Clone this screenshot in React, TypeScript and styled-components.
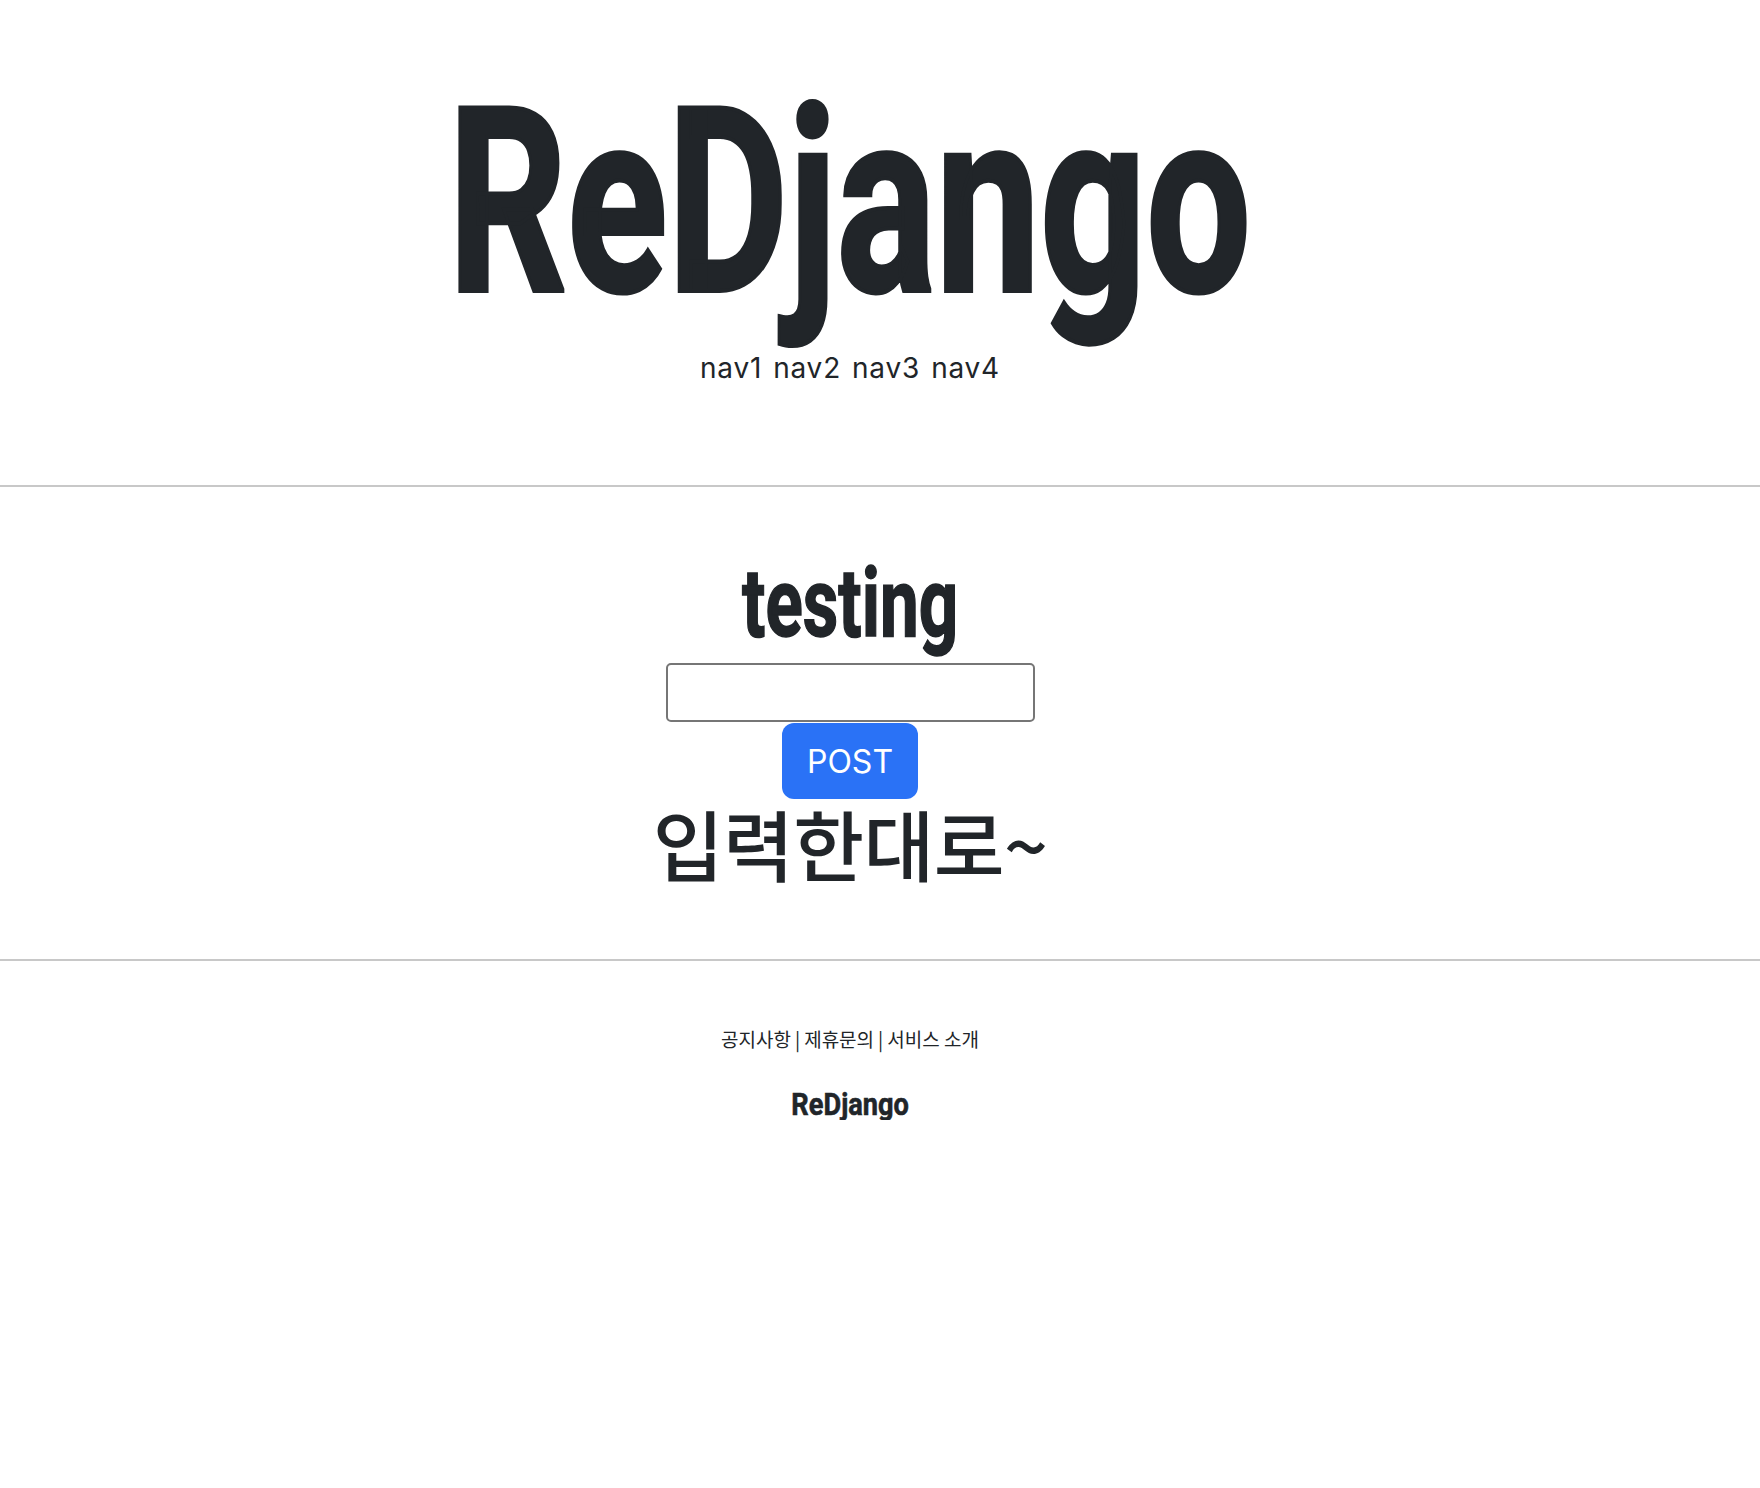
import * as React from "react";
import { useState } from "react";
import styled, { createGlobalStyle } from "styled-components";

const GlobalStyle = createGlobalStyle`
  html, body {
    margin: 0;
    padding: 0;
    background: #fff;
    color: #212529;
    font-family: Inter, "Noto Sans CJK KR", sans-serif;
  }
`;

const Page = styled.div`
  display: flex;
  flex-direction: column;
  width: 100%;
`;

// content sits a little left of the window centre in the original
const Section = styled.section<{ $top: number; $bottom: number }>`
  display: flex;
  flex-direction: column;
  align-items: center;
  padding: ${(p) => p.$top}px 60px ${(p) => p.$bottom}px 0;
`;

// no Oswald offline: bold Roboto squeezed sideways
const Condensed = styled.span<{ $size: number; $scale: number; $stroke: number }>`
  display: inline-block;
  font-family: Roboto, "Liberation Sans", sans-serif;
  font-weight: 700;
  font-size: ${(p) => p.$size}px;
  line-height: 1;
  color: #212529;
  -webkit-text-stroke: ${(p) => p.$stroke}px #212529;
  transform: scaleX(${(p) => p.$scale});
  transform-origin: center;
  white-space: nowrap;
`;

const Nav = styled.nav`
  display: flex;
  gap: 11px;
  margin-top: 22px;
  font-family: Inter, sans-serif;
  font-size: 28px;
  letter-spacing: 0.8px;
  line-height: 1;
  color: #212529;
`;

const NavLink = styled.a`
  color: inherit;
  text-decoration: none;
`;

const Divider = styled.hr`
  width: 100%;
  margin: 0;
  border: 0;
  border-top: 2px solid #c8c8c8;
`;

const TextInput = styled.input`
  box-sizing: border-box;
  width: 369px;
  height: 59px;
  margin-top: 12px;
  border: 2px solid #767676;
  border-radius: 5px;
  padding: 0 10px;
  font-size: 28px;
  font-family: Inter, sans-serif;
  outline: none;
`;

const PostButton = styled.button`
  box-sizing: border-box;
  width: 136px;
  height: 76px;
  margin-top: 1px;
  border: 0;
  border-radius: 12px;
  background: #2a72f6;
  color: #fff;
  font-family: Inter, sans-serif;
  font-size: 32px;
  cursor: pointer;
`;

const Output = styled.div`
  margin-top: -2px;
  font-family: "Noto Sans CJK KR", sans-serif;
  font-weight: 500;
  font-size: 77px;
  letter-spacing: -0.6px;
  line-height: 1.2;
  color: #212529;
`;

const FooterLinks = styled.div`
  display: flex;
  gap: 4px;
  margin-bottom: 40px;
  font-family: "Noto Sans CJK KR", sans-serif;
  font-size: 19px;
  line-height: 1;
  color: #212529;
`;

export default function App() {
  const [text, setText] = useState("");
  const [shown, setShown] = useState("입력한대로~");

  return (
    <Page>
      <GlobalStyle />
      <Section $top={74} $bottom={103}>
        <Condensed $size={258} $scale={0.72} $stroke={4}>
          ReDjango
        </Condensed>
        <Nav>
          <NavLink href="#">nav1</NavLink>
          <NavLink href="#">nav2</NavLink>
          <NavLink href="#">nav3</NavLink>
          <NavLink href="#">nav4</NavLink>
        </Nav>
      </Section>
      <Divider />
      <Section $top={68} $bottom={70}>
        <Condensed $size={96} $scale={0.72} $stroke={1.5}>
          testing
        </Condensed>
        <TextInput value={text} onChange={(e) => setText(e.target.value)} />
        <PostButton onClick={() => text && setShown(text)}>POST</PostButton>
        <Output>{shown}</Output>
      </Section>
      <Divider />
      <Section $top={68} $bottom={0}>
        <FooterLinks>
          <span>공지사항</span>|<span>제휴문의</span>|<span>서비스 소개</span>
        </FooterLinks>
        <Condensed $size={32} $scale={0.85} $stroke={0.6}>
          ReDjango
        </Condensed>
      </Section>
    </Page>
  );
}
